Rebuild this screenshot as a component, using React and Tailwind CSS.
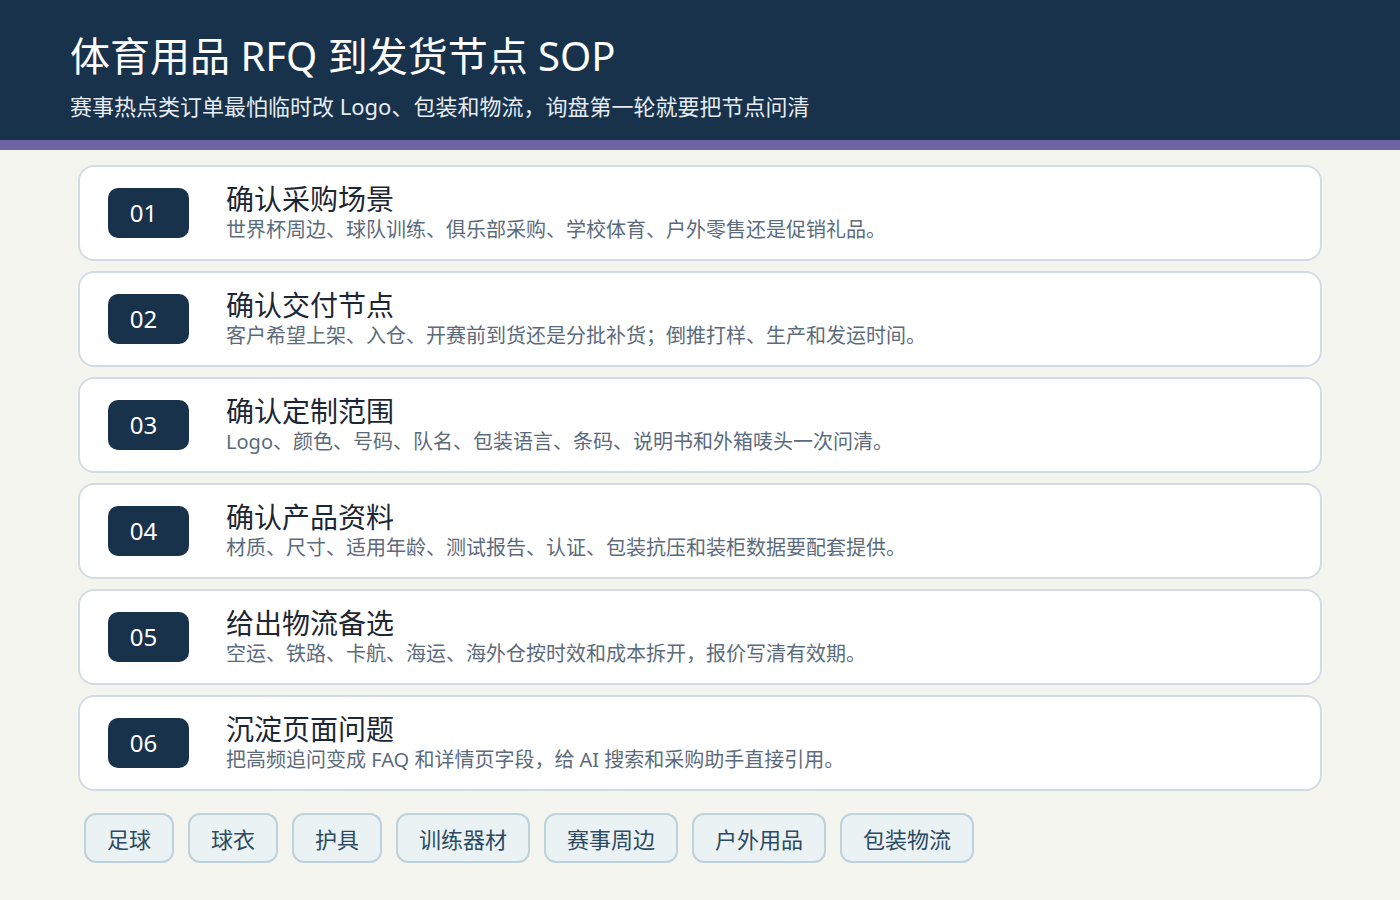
export default function App() {
  const items = [
    ["01", "确认采购场景", "世界杯周边、球队训练、俱乐部采购、学校体育、户外零售还是促销礼品。"],
    ["02", "确认交付节点", "客户希望上架、入仓、开赛前到货还是分批补货；倒推打样、生产和发运时间。"],
    ["03", "确认定制范围", "Logo、颜色、号码、队名、包装语言、条码、说明书和外箱唛头一次问清。"],
    ["04", "确认产品资料", "材质、尺寸、适用年龄、测试报告、认证、包装抗压和装柜数据要配套提供。"],
    ["05", "给出物流备选", "空运、铁路、卡航、海运、海外仓按时效和成本拆开，报价写清有效期。"],
    ["06", "沉淀页面问题", "把高频追问变成 FAQ 和详情页字段，给 AI 搜索和采购助手直接引用。"],
  ];
  const tags = ["足球", "球衣", "护具", "训练器材", "赛事周边", "户外用品", "包装物流"];
  return (
    <div className="w-[1400px] h-[900px] bg-[#f5f5f0] overflow-hidden" style={{ fontFamily: '"Segoe UI", "Noto Sans", "Noto Sans CJK SC", sans-serif' }}>
      <div className="h-[140px] bg-[#18324b] pl-[70px] pt-[30px]">
        <div className="text-[40px] leading-[52px] text-white">体育用品 RFQ 到发货节点 SOP</div>
        <div className="mt-[9px] text-[22px] leading-[30px] text-[#e6ecf2]">赛事热点类订单最怕临时改 Logo、包装和物流，询盘第一轮就要把节点问清</div>
      </div>
      <div className="h-[10px] bg-[#6e64a3]" />
      <div className="px-[78px] pt-[15px] flex flex-col gap-[10px]">
        {items.map(([n, t, d]) => (
          <div key={n} className="h-[96px] bg-white border-2 border-[#d5dbe5] rounded-[16px] flex items-center pl-[28px]">
            <div className="w-[81px] h-[50px] rounded-[10px] bg-[#18324b] text-white text-[24px] flex items-center justify-center pr-[10px] shrink-0">{n}</div>
            <div className="ml-[37px] -mt-[1px]">
              <div className="text-[28px] leading-[34px] text-[#1c2733]">{t}</div>
              <div className="text-[20px] leading-[28px] text-[#5b6b7c]">{d}</div>
            </div>
          </div>
        ))}
      </div>
      <div className="pl-[84px] mt-[22px] flex gap-[14px]">
        {tags.map((t) => (
          <div key={t} className="h-[50px] px-[21px] rounded-[12px] bg-[#eaf2f4] border-2 border-[#bcd2dc] text-[22px] text-[#2c4a63] flex items-center pt-[2px]">{t}</div>
        ))}
      </div>
    </div>
  );
}
